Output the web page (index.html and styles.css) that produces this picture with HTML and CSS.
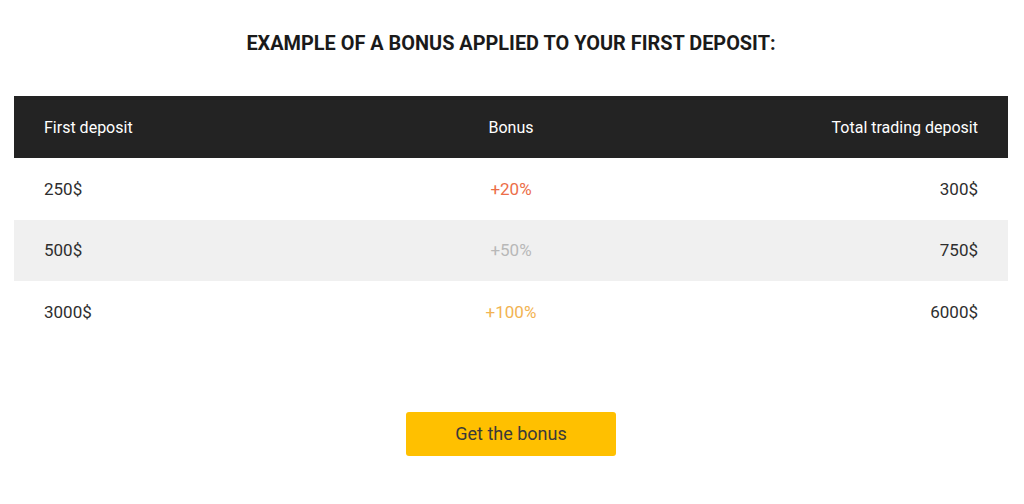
FILE: index.html
```html
<!DOCTYPE html>
<html>
<head>
<meta charset="utf-8">
<link rel="stylesheet" href="styles.css">
</head>
<body>
<main class="page">
  <h2 class="title">EXAMPLE OF A BONUS APPLIED TO YOUR FIRST DEPOSIT:</h2>
  <table class="bonus-table">
    <thead>
      <tr>
        <th class="c-left">First deposit</th>
        <th class="c-mid">Bonus</th>
        <th class="c-right">Total trading deposit</th>
      </tr>
    </thead>
    <tbody>
      <tr>
        <td class="c-left">250$</td>
        <td class="c-mid b-red">+20%</td>
        <td class="c-right">300$</td>
      </tr>
      <tr class="striped">
        <td class="c-left">500$</td>
        <td class="c-mid b-grey">+50%</td>
        <td class="c-right">750$</td>
      </tr>
      <tr>
        <td class="c-left">3000$</td>
        <td class="c-mid b-gold">+100%</td>
        <td class="c-right">6000$</td>
      </tr>
    </tbody>
  </table>
  <div class="actions">
    <a class="btn" href="#">Get the bonus</a>
  </div>
</main>
</body>
</html>
```

FILE: styles.css
```css
* { box-sizing: border-box; }
html, body { margin: 0; padding: 0; background: #fff; }
body { font-family: Roboto, "Noto Sans", Arial, sans-serif; color: #333; }
.page { padding: 0 16px 0 14px; }
.title {
  margin: 0;
  padding-top: 33px;
  height: 96px;
  text-align: center;
  font-size: 19.9px;
  font-weight: 700;
  color: #1a1a1a;
  line-height: 22px;
}
.bonus-table {
  width: 100%;
  border-collapse: collapse;
  font-size: 16px;
}
.bonus-table th, .bonus-table td {
  height: 61.5px;
  padding: 0 30px;
  font-weight: 400;
  vertical-align: middle;
}
.bonus-table thead tr { background: #232323; color: #fff; }
.bonus-table th { height: 62px; }
.bonus-table td { color: #2e2e2e; font-size: 17px; }
.bonus-table tr.striped { background: #f0f0f0; }
.c-left { text-align: left; width: 33%; }
.c-mid { text-align: center; }
.c-right { text-align: right; width: 33%; }
.b-red { color: #ec6e48 !important; }
.b-grey { color: #b8b8b8 !important; }
.b-gold { color: #f2b352 !important; }
.actions {
  display: flex;
  justify-content: center;
  padding-top: 69px;
}
.btn {
  display: flex;
  align-items: center;
  justify-content: center;
  width: 210px;
  height: 44px;
  background: #ffc000;
  border-radius: 3px;
  color: #3a3a3a;
  font-size: 18px;
  text-decoration: none;
}
```
